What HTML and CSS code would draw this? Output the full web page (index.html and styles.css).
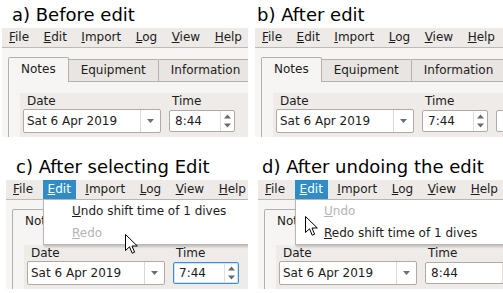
FILE: index.html
```html
<!DOCTYPE html>
<html>
<head>
<meta charset="utf-8">
<link rel="stylesheet" href="styles.css">
</head>
<body>
<div class="grid">

  <section class="panel pa">
    <div class="title">a) Before edit</div>
    <div class="win">
      <div class="menubar">
        <span class="mi"><u>F</u>ile</span>
        <span class="mi"><u>E</u>dit</span>
        <span class="mi"><u>I</u>mport</span>
        <span class="mi"><u>L</u>og</span>
        <span class="mi"><u>V</u>iew</span>
        <span class="mi"><u>H</u>elp</span>
      </div>
      <div class="content">
        <div class="tabs">
          <div class="tab sel">Notes</div>
          <div class="tab">Equipment</div>
          <div class="tab">Information</div>
        </div>
        <div class="pane">
          <div class="frame">
            <div class="field">
              <div class="lbl">Date</div>
              <div class="combo"><span class="val">Sat 6 Apr 2019</span><span class="drop"><svg width="7" height="4" viewBox="0 0 7 4"><path d="M0 0H7L3.5 4Z" fill="#6e6e6e"/></svg></span></div>
            </div>
            <div class="field tfield">
              <div class="lbl tl">Time</div>
              <div class="spin"><span class="val">8:44</span><span class="arrows"><svg width="7" height="20" viewBox="0 0 7 20"><path d="M0 7.5L3.5 3.5L7 7.5Z M0 12.5L3.5 16.5L7 12.5Z" fill="#6a6a6a"/></svg></span></div>
            </div>
          </div>
        </div>
      </div>
    </div>
  </section>

  <section class="panel pb">
    <div class="title">b) After edit</div>
    <div class="win">
      <div class="menubar">
        <span class="mi"><u>F</u>ile</span>
        <span class="mi"><u>E</u>dit</span>
        <span class="mi"><u>I</u>mport</span>
        <span class="mi"><u>L</u>og</span>
        <span class="mi"><u>V</u>iew</span>
        <span class="mi"><u>H</u>elp</span>
      </div>
      <div class="content">
        <div class="tabs">
          <div class="tab sel">Notes</div>
          <div class="tab">Equipment</div>
          <div class="tab">Information</div>
        </div>
        <div class="pane">
          <div class="frame">
            <div class="field">
              <div class="lbl">Date</div>
              <div class="combo"><span class="val">Sat 6 Apr 2019</span><span class="drop"><svg width="7" height="4" viewBox="0 0 7 4"><path d="M0 0H7L3.5 4Z" fill="#6e6e6e"/></svg></span></div>
            </div>
            <div class="field tfield">
              <div class="lbl tl">Time</div>
              <div class="spin"><span class="val">7:44</span><span class="arrows"><svg width="7" height="20" viewBox="0 0 7 20"><path d="M0 7.5L3.5 3.5L7 7.5Z M0 12.5L3.5 16.5L7 12.5Z" fill="#6a6a6a"/></svg></span></div>
            </div>
            <div class="next"></div>
          </div>
        </div>
      </div>
    </div>
  </section>

  <section class="panel pc">
    <div class="title">c) After selecting Edit</div>
    <div class="win">
      <div class="menubar">
        <span class="mi"><u>F</u>ile</span>
        <span class="mi on"><u>E</u>dit</span>
        <span class="mi"><u>I</u>mport</span>
        <span class="mi"><u>L</u>og</span>
        <span class="mi"><u>V</u>iew</span>
        <span class="mi"><u>H</u>elp</span>
      </div>
      <div class="content">
        <div class="tabs">
          <div class="tab sel">Notes</div>
          <div class="tab blank"></div>
        </div>
        <div class="pane">
          <div class="frame">
            <div class="field">
              <div class="lbl">Date</div>
              <div class="combo"><span class="val">Sat 6 Apr 2019</span><span class="drop"><svg width="7" height="4" viewBox="0 0 7 4"><path d="M0 0H7L3.5 4Z" fill="#6e6e6e"/></svg></span></div>
            </div>
            <div class="field tfield">
              <div class="lbl tl">Time</div>
              <div class="spin focus"><span class="val">7:44</span><span class="arrows"><svg width="7" height="20" viewBox="0 0 7 20"><path d="M0 7.5L3.5 3.5L7 7.5Z M0 12.5L3.5 16.5L7 12.5Z" fill="#6a6a6a"/></svg></span></div>
            </div>
          </div>
        </div>
      </div>
      <div class="menu">
        <div class="it"><u>U</u>ndo shift time of 1 dives</div>
        <div class="it dis"><u>R</u>edo</div>
      </div>
    </div>
    <svg class="cursor cc" width="13" height="20" viewBox="0 0 13 20"><path d="M0.5 0.5V16.5L4.5 12.8L7.2 19.2L9.6 18.2L7 12H12.3Z" fill="#fff" stroke="#000" stroke-width="1" stroke-linejoin="round"/></svg>
  </section>

  <section class="panel pd">
    <div class="title">d) After undoing the edit</div>
    <div class="win">
      <div class="menubar">
        <span class="mi"><u>F</u>ile</span>
        <span class="mi on"><u>E</u>dit</span>
        <span class="mi"><u>I</u>mport</span>
        <span class="mi"><u>L</u>og</span>
        <span class="mi"><u>V</u>iew</span>
        <span class="mi"><u>H</u>elp</span>
      </div>
      <div class="content">
        <div class="tabs">
          <div class="tab sel">Notes</div>
          <div class="tab blank"></div>
        </div>
        <div class="pane">
          <div class="frame">
            <div class="field">
              <div class="lbl">Date</div>
              <div class="combo"><span class="val">Sat 6 Apr 2019</span><span class="drop"><svg width="7" height="4" viewBox="0 0 7 4"><path d="M0 0H7L3.5 4Z" fill="#6e6e6e"/></svg></span></div>
            </div>
            <div class="field tfield">
              <div class="lbl tl">Time</div>
              <div class="spin wide"><span class="val">8:44</span><span class="arrows"><svg width="7" height="20" viewBox="0 0 7 20"><path d="M0 7.5L3.5 3.5L7 7.5Z M0 12.5L3.5 16.5L7 12.5Z" fill="#6a6a6a"/></svg></span></div>
            </div>
          </div>
        </div>
      </div>
      <div class="menu">
        <div class="it dis"><u>U</u>ndo</div>
        <div class="it"><u>R</u>edo shift time of 1 dives</div>
      </div>
    </div>
    <svg class="cursor cd" width="13" height="20" viewBox="0 0 13 20"><path d="M0.5 0.5V16.5L4.5 12.8L7.2 19.2L9.6 18.2L7 12H12.3Z" fill="#fff" stroke="#000" stroke-width="1" stroke-linejoin="round"/></svg>
  </section>

</div>
</body>
</html>
```

FILE: styles.css
```css
* { box-sizing: border-box; }

html, body {
  margin: 0;
  padding: 0;
  background: #ffffff;
}

body {
  width: 503px;
  height: 293px;
  overflow: hidden;
  font-family: "DejaVu Sans", "Liberation Sans", sans-serif;
  font-size: 12px;
  color: #1c1c1c;
}

.grid {
  display: grid;
  grid-template-columns: 252px 251px;
  grid-template-rows: 152px 141px;
}

.panel {
  position: relative;
  overflow: hidden;
}

.title {
  height: 28px;
  padding-top: 4px;
  line-height: 22px;
  font-size: 18px;
  color: #000;
  white-space: nowrap;
}

.pa .title { padding-left: 12px; }
.pb .title { padding-left: 5px; }
.pc .title { padding-left: 16px; }
.pd .title { padding-left: 10px; }

.win {
  position: relative;
  height: 109px;
  overflow: hidden;
  background: #f6f5f3;
}

.pa .win { margin-left: 2px; width: 246px; }
.pb .win { margin-left: 3px; width: 248px; }
.pc .win { margin-left: 6px; width: 242px; }
.pd .win { margin-left: 6px; width: 245px; }

.menubar {
  display: flex;
  gap: 4.5px;
  padding-left: 2px;
  height: 20px;
  line-height: 19px;
  background: #edeae7;
  border-bottom: 1px solid #bdb9b5;
  white-space: nowrap;
}

.mi {
  padding: 0 5px;
  height: 19px;
}

.mi.on {
  background: #308cc6;
  color: #fff;
}

.content {
  padding: 9px 0 0 6px;
}

.tabs {
  display: flex;
  align-items: flex-end;
  height: 24px;
  white-space: nowrap;
}

.tab {
  height: 22px;
  line-height: 21px;
  padding: 0 12px;
  border: 1px solid #b4b0ac;
  border-left: none;
  border-bottom: none;
  background: #e8e5e2;
  border-radius: 0 2px 0 0;
}

.tab.blank {
  width: 160px;
}

.tab.sel {
  position: relative;
  z-index: 1;
  height: 25px;
  line-height: 23px;
  margin-bottom: -1px;
  border-left: 1px solid #b4b0ac;
  background: #f6f5f3;
  border-radius: 2px 2px 0 0;
}

.pane {
  height: 80px;
  border-top: 1px solid #b4b0ac;
  border-left: 1px solid #b4b0ac;
  padding: 11px 0 0 11px;
}

.frame {
  display: flex;
  align-items: flex-start;
  gap: 8px;
  height: 100%;
  padding: 1px 0 0 3px;
  background: #eeebe8;
  white-space: nowrap;
}

.field {
  display: flex;
  flex-direction: column;
  flex: none;
}

.lbl {
  height: 14px;
  line-height: 14px;
  margin: 0 0 1px 4px;
}

.lbl.tl {
  margin: 0 0 2px 3px;
}

.combo {
  display: flex;
  align-items: center;
  width: 138px;
  height: 24px;
  border: 1px solid #aeaaa6;
  border-radius: 2px;
  background: #fff;
}

.combo .val {
  padding-left: 3px;
  line-height: 22px;
}

.drop {
  margin-left: auto;
  width: 20px;
  height: 100%;
  border-left: 1px solid #dcd8d4;
  display: flex;
  align-items: center;
  justify-content: center;
}

.spin {
  display: flex;
  align-items: center;
  width: 66px;
  height: 22px;
  border: 1px solid #aeaaa6;
  border-radius: 2px;
  background: #fff;
}

.spin.wide { width: 92px; }

.spin.focus {
  border-color: #3a8fd2;
  box-shadow: inset 0 0 0 1px rgba(58, 143, 210, 0.25);
}

.spin .val {
  padding-left: 5px;
  line-height: 20px;
}

.arrows {
  margin-left: auto;
  width: 14px;
  height: 100%;
  border-left: 1px solid #e2dfdc;
  display: flex;
  align-items: center;
  justify-content: center;
}

.next {
  flex: none;
  width: 60px;
  height: 22px;
  margin-top: 16px;
  border: 1px solid #aeaaa6;
  border-radius: 2px;
  background: #fff;
}

.menu {
  position: absolute;
  left: 37px;
  top: 19px;
  width: 240px;
  z-index: 5;
  background: #fff;
  border: 1px solid #b6b6b6;
  box-shadow: 1px 2px 2px rgba(0, 0, 0, 0.18);
}

.it {
  height: 22px;
  line-height: 22px;
  padding-left: 28px;
  white-space: nowrap;
  color: #1c1c1c;
}

.it.dis {
  color: #b4b4b4;
}

.cursor {
  position: absolute;
  z-index: 10;
}

.cc { left: 125px; top: 82px; }
.cd { left: 53px; top: 64px; }
```
